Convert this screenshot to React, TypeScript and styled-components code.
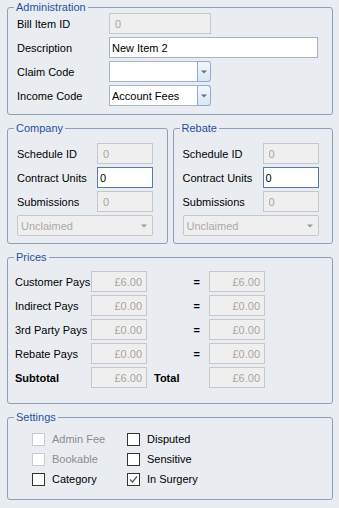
import React from 'react';
import styled, { createGlobalStyle } from 'styled-components';

const GlobalStyle = createGlobalStyle`
  html, body {
    margin: 0;
    padding: 0;
    background: #e9edf2;
  }
  body {
    font-family: "Liberation Sans", Tahoma, Arial, sans-serif;
    font-size: 11px;
    color: #000;
  }
`;

const Page = styled.div`
  width: 339px;
  height: 508px;
  box-sizing: border-box;
  padding: 1px 6px 0 7px;
  display: flex;
  flex-direction: column;
  gap: 7px;
  overflow: hidden;
`;

const Group = styled.fieldset`
  margin: 0;
  padding: 0;
  min-width: 0;
  border: 1px solid #8d9fbb;
  border-radius: 3px;
`;

const Legend = styled.legend`
  margin-left: 6px;
  padding: 0 2px;
  font-size: 11px;
  line-height: 12px;
  color: #1e50a2;
`;

const Body = styled.div<{ $pad: string; $cols: string; $rows?: number; $gap?: number }>`
  display: grid;
  padding: ${p => p.$pad};
  grid-template-columns: ${p => p.$cols};
  grid-auto-rows: ${p => p.$rows ?? 21}px;
  row-gap: ${p => p.$gap ?? 3}px;
`;

const Pair = styled.div`
  display: grid;
  grid-template-columns: 1fr 1fr;
  gap: 5px;
`;

const Label = styled.span<{ $bold?: boolean; $pl?: number }>`
  display: flex;
  align-items: center;
  white-space: nowrap;
  font-weight: ${p => (p.$bold ? 'bold' : 'normal')};
  padding-left: ${p => p.$pl ?? 0}px;
`;

const Equals = styled.span`
  display: flex;
  align-items: center;
  justify-content: flex-end;
  padding-right: 9px;
  font-weight: bold;
`;

const Field = styled.input<{ $w: number; $focus?: boolean; $right?: boolean }>`
  box-sizing: border-box;
  width: ${p => p.$w}px;
  height: 21px;
  margin: 0;
  padding: 0 ${p => (p.$right ? 4 : 2)}px 0 ${p => (p.$right ? 2 : 2)}px;
  font-family: inherit;
  font-size: 11px;
  color: #000;
  text-align: ${p => (p.$right ? 'right' : 'left')};
  background: #fff;
  border: 1px solid ${p => (p.$focus ? '#5a78a6' : '#a3b4cc')};
  border-radius: 0;
  outline: none;

  &:disabled {
    background: #efefef;
    border-color: #c4c8cd;
    color: #aaa59c;
    padding-left: ${p => (p.$right ? 2 : 5)}px;
  }
`;

const Combo = styled.div<{ $w: number; $disabled?: boolean; $span?: boolean }>`
  box-sizing: border-box;
  width: ${p => p.$w}px;
  height: 21px;
  display: flex;
  align-items: stretch;
  grid-column: ${p => (p.$span ? '1 / -1' : 'auto')};
  background: ${p => (p.$disabled ? '#efefef' : '#fff')};
  border: 1px solid ${p => (p.$disabled ? '#c4c8cd' : '#a3b4cc')};
  border-right: ${p => (p.$disabled ? undefined : 'none')};
  border-radius: ${p => (p.$disabled ? '2px' : '0 3px 3px 0')};
  color: ${p => (p.$disabled ? '#aaa' : '#000')};
`;

const ComboText = styled.span<{ $pl: number }>`
  flex: 1;
  display: flex;
  align-items: center;
  padding-left: ${p => p.$pl}px;
  white-space: nowrap;
  overflow: hidden;
`;

const DropButton = styled.span<{ $plain?: boolean }>`
  width: ${p => (p.$plain ? 16 : 14)}px;
  display: flex;
  align-items: center;
  justify-content: center;
  margin: ${p => (p.$plain ? 0 : '-1px 0')};
  box-sizing: border-box;
  background: ${p => (p.$plain ? 'transparent' : 'linear-gradient(#f3f7fc, #d9e6f4)')};
  border: ${p => (p.$plain ? 'none' : '1px solid #93aacb')};
  border-radius: 0 3px 3px 0;
`;

const Arrow = ({ color }: { color: string }) => (
  <svg width="6" height="4" viewBox="0 0 6 4">
    <path d="M0 0.5 H6 L3 3.5 Z" fill={color} />
  </svg>
);

const CheckRow = styled.label<{ $disabled?: boolean }>`
  display: flex;
  align-items: center;
  gap: 7px;
  white-space: nowrap;
  color: ${p => (p.$disabled ? '#8c8c8c' : '#000')};
`;

const Box = styled.span<{ $disabled?: boolean }>`
  box-sizing: border-box;
  width: 13px;
  height: 13px;
  display: flex;
  align-items: center;
  justify-content: center;
  background: #fff;
  border: 1px solid ${p => (p.$disabled ? '#c9cbce' : '#333')};
`;

function Check({ label, disabled, checked }: { label: string; disabled?: boolean; checked?: boolean }) {
  return (
    <CheckRow $disabled={disabled}>
      <Box $disabled={disabled}>
        {checked && (
          <svg width="9" height="9" viewBox="0 0 9 9">
            <path d="M1 4.5 L3.5 7 L8 1.5" fill="none" stroke="#555" strokeWidth="1.2" />
          </svg>
        )}
      </Box>
      {label}
    </CheckRow>
  );
}

function SidePanel({ title }: { title: string }) {
  return (
    <Group>
      <Legend>{title}</Legend>
      <Body $pad="9px 0 7px 9px" $cols="80px 56px">
        <Label>Schedule ID</Label>
        <Field $w={56} disabled defaultValue="0" />
        <Label>Contract Units</Label>
        <Field $w={56} $focus defaultValue="0" />
        <Label>Submissions</Label>
        <Field $w={56} disabled defaultValue="0" />
        <Combo $w={136} $disabled $span>
          <ComboText $pl={3}>Unclaimed</ComboText>
          <DropButton $plain>
            <Arrow color="#9a9a9a" />
          </DropButton>
        </Combo>
      </Body>
    </Group>
  );
}

const prices = [
  { label: 'Customer Pays', left: '£6.00', right: '£6.00' },
  { label: 'Indirect Pays', left: '£0.00', right: '£0.00' },
  { label: '3rd Party Pays', left: '£0.00', right: '£0.00' },
  { label: 'Rebate Pays', left: '£0.00', right: '£0.00' },
];

export default function App() {
  return (
    <>
      <GlobalStyle />
      <Page>
        <Group>
          <Legend>Administration</Legend>
          <Body $pad="0 0 8px 9px" $cols="92px 1fr">
            <Label>Bill Item ID</Label>
            <Field $w={102} disabled defaultValue="0" />
            <Label>Description</Label>
            <Field $w={209} defaultValue="New Item 2" />
            <Label>Claim Code</Label>
            <Combo $w={102}>
              <ComboText $pl={2}></ComboText>
              <DropButton>
                <Arrow color="#6d6d6d" />
              </DropButton>
            </Combo>
            <Label>Income Code</Label>
            <Combo $w={102}>
              <ComboText $pl={2}>Account Fees</ComboText>
              <DropButton>
                <Arrow color="#6d6d6d" />
              </DropButton>
            </Combo>
          </Body>
        </Group>

        <Pair>
          <SidePanel title="Company" />
          <SidePanel title="Rebate" />
        </Pair>

        <Group>
          <Legend>Prices</Legend>
          <Body $pad="8px 0 15px 7px" $cols="76px 56px 62px 56px">
            {prices.map(p => (
              <React.Fragment key={p.label}>
                <Label>{p.label}</Label>
                <Field $w={56} $right disabled defaultValue={p.left} />
                <Equals>=</Equals>
                <Field $w={56} $right disabled defaultValue={p.right} />
              </React.Fragment>
            ))}
            <Label $bold>Subtotal</Label>
            <Field $w={56} $right disabled defaultValue="£6.00" />
            <Label $bold $pl={7}>Total</Label>
            <Field $w={56} $right disabled defaultValue="£6.00" />
          </Body>
        </Group>

        <Group>
          <Legend>Settings</Legend>
          <Body $pad="6px 0 10px 24px" $cols="95px auto" $rows={20} $gap={0}>
            <Check label="Admin Fee" disabled />
            <Check label="Disputed" />
            <Check label="Bookable" disabled />
            <Check label="Sensitive" />
            <Check label="Category" />
            <Check label="In Surgery" checked />
          </Body>
        </Group>
      </Page>
    </>
  );
}
